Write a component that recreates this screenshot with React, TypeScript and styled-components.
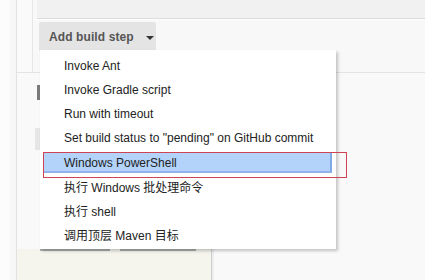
import styled, { createGlobalStyle } from 'styled-components'

const items = [
  'Invoke Ant',
  'Invoke Gradle script',
  'Run with timeout',
  'Set build status to "pending" on GitHub commit',
  'Windows PowerShell',
  '执行 Windows 批处理命令',
  '执行 shell',
  '调用顶层 Maven 目标',
]

export default function App() {
  return (
    <>
      <GlobalStyle />
      <Page>
        <LeftRail />
        <Main>
          <Section>
            <Gutter />
            <Panel>
              <TopBox />
              <StepArea>
                <AddButton>
                  Add build step <Caret />
                </AddButton>
              </StepArea>
            </Panel>
          </Section>
          <Lower>
            <Marker />
            <GrayBlock />
            <Spacer />
            <Footer>
              <FooterBox>
                <BtnTop $w={70} />
                <BtnTop $w={76} />
              </FooterBox>
              <FooterRest />
            </Footer>
          </Lower>
        </Main>

        <Menu>
          {items.map((label, i) => (
            <Item key={label} $active={i === 4}>
              <span>{label}</span>
            </Item>
          ))}
        </Menu>
        <Annotation />
      </Page>
    </>
  )
}

const GlobalStyle = createGlobalStyle`
  html, body { margin: 0; padding: 0; }
  body {
    width: 425px;
    height: 280px;
    overflow: hidden;
    background: #f9f9f9;
    font-family: "Liberation Sans", Arial, "Noto Sans CJK SC", sans-serif;
  }
`

const Page = styled.div`
  position: relative;
  display: flex;
  width: 425px;
  height: 280px;
`

const LeftRail = styled.div`
  width: 16px;
  flex: none;
  background: #fcfcfc;
  border-right: 1px solid #e2e2e2;
  box-shadow: inset -6px 0 0 #f7f7f7;
`

const Main = styled.div`
  flex: 1;
  display: flex;
  flex-direction: column;
`

const Section = styled.div`
  display: flex;
  height: 72px;
  border-bottom: 1px solid #e4e4e4;
`

const Gutter = styled.div`
  width: 15px;
  background: #fafafa;
  border-right: 1px solid #e6e6e6;
`

const Panel = styled.div`
  flex: 1;
  display: flex;
  flex-direction: column;
  background: #f8f8f8;
`

const TopBox = styled.div`
  height: 18px;
  margin-left: 4px;
  background: #f1f1f1;
  border-bottom: 1px solid #dcdcdc;
`

const StepArea = styled.div`
  flex: 1;
  padding: 2px 0 0 6px;
  border-top: 1px solid #fdfdfd;
`

const AddButton = styled.div`
  display: flex;
  align-items: center;
  width: 117px;
  height: 29px;
  box-sizing: border-box;
  padding-left: 10px;
  background: #e4e4e4;
  border-radius: 2px 2px 0 0;
  color: #555;
  font-size: 12px;
  font-weight: bold;
  letter-spacing: 0.1px;
  white-space: pre;
`

const Caret = styled.span`
  margin-left: 9px;
  margin-top: 2px;
  width: 0;
  height: 0;
  border-left: 4px solid transparent;
  border-right: 4px solid transparent;
  border-top: 4px solid #333;
`

const Lower = styled.div`
  flex: 1;
  display: flex;
  flex-direction: column;
  background: #f9f9f9;
  position: relative;
`

const Marker = styled.div`
  margin: 12px 0 0 20px;
  width: 3px;
  height: 15px;
  background: #7a7a7a;
`

const GrayBlock = styled.div`
  margin: 28px 0 0 18px;
  width: 5px;
  height: 22px;
  background: #e6e6e6;
`

const Spacer = styled.div`
  flex: 1;
`

const Footer = styled.div`
  display: flex;
  height: 31px;
`

const FooterBox = styled.div`
  width: 195px;
  display: flex;
  gap: 10px;
  padding-left: 23px;
  box-sizing: border-box;
  background: #f5f5ee;
  border-right: 1px solid #cfcfcf;
`

const BtnTop = styled.div<{ $w: number }>`
  width: ${p => p.$w}px;
  height: 2px;
  background: #a9aeab;
`

const FooterRest = styled.div`
  flex: 1;
  background: #f9f9f9;
  border-left: 2px solid #ededed;
`

const Menu = styled.div`
  position: absolute;
  left: 40px;
  top: 50px;
  width: 296px;
  height: 199px;
  box-sizing: border-box;
  padding-top: 4px;
  background: #fff;
  box-shadow: 2px 2px 3px rgba(0, 0, 0, 0.22);
`

const Item = styled.div<{ $active: boolean }>`
  position: relative;
  height: 24px;
  display: flex;
  align-items: center;
  padding-left: 24px;
  font-size: 12px;
  color: #222;
  white-space: nowrap;

  &::before {
    content: '';
    display: ${p => (p.$active ? 'block' : 'none')};
    position: absolute;
    left: 3px;
    right: 4px;
    top: 3px;
    bottom: 1px;
    background: #b3d3fb;
    border-right: 2px solid #80a9e8;
    border-bottom: 2px solid #8fb3ea;
  }

  span {
    position: relative;
    margin-top: ${p => (p.$active ? '1px' : '0')};
  }
`

const Annotation = styled.div`
  position: absolute;
  left: 43px;
  top: 152px;
  width: 304px;
  height: 26px;
  box-sizing: border-box;
  border: 1px solid #cf4455;
`
